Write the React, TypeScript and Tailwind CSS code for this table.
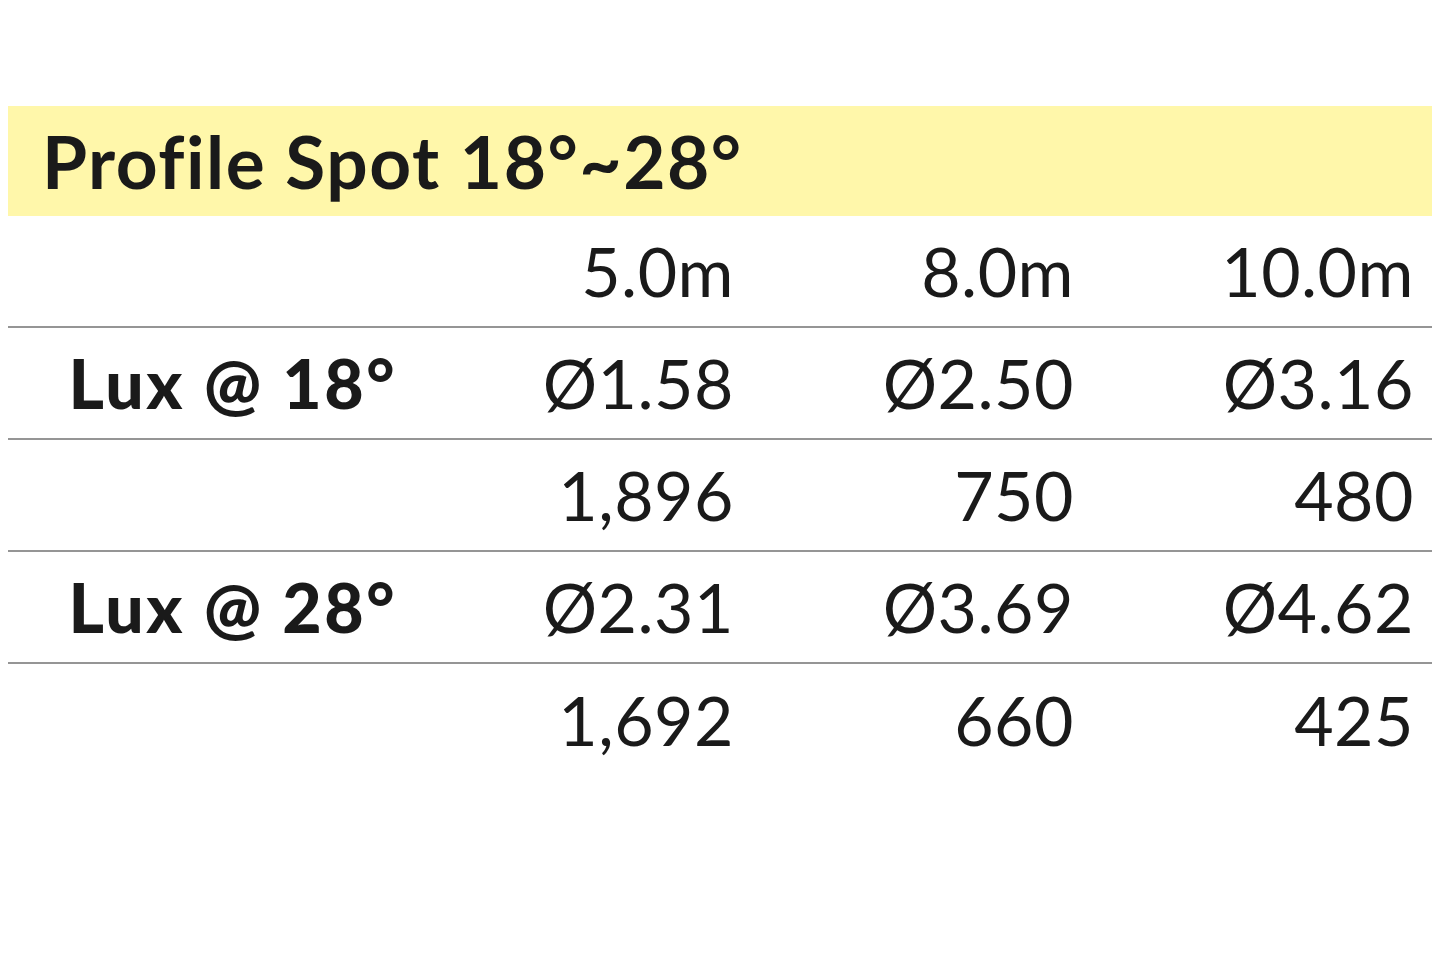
import React from 'react';

const rows: { label: string; values: string[] }[] = [
  { label: '', values: ['5.0m', '8.0m', '10.0m'] },
  { label: 'Lux @ 18°', values: ['Ø1.58', 'Ø2.50', 'Ø3.16'] },
  { label: '', values: ['1,896', '750', '480'] },
  { label: 'Lux @ 28°', values: ['Ø2.31', 'Ø3.69', 'Ø4.62'] },
  { label: '', values: ['1,692', '660', '425'] },
];

export default function App() {
  return (
    <div className="min-h-screen bg-white pt-[106px] px-[8px] text-[#1a1a1a] font-['Lato','Noto_Sans',sans-serif] [font-variant-ligatures:none]">
      <div className="w-[1424px]">
        {/* Title band */}
        <div className="h-[110px] bg-[#fff7aa] flex items-center pl-[34px]">
          <h1 className="text-[73px] font-bold leading-none tracking-[1.5px]">Profile Spot 18°~28°</h1>
        </div>

        {rows.map((row, i) => (
          <div
            key={i}
            className={`grid grid-cols-[404px_340px_340px_340px] h-[112px] items-center ${
              i < rows.length - 1 ? 'border-b-2 border-[#959595]' : ''
            }`}
          >
            <div className="text-right pr-[15px] text-[68px] font-black leading-none tracking-[2.5px]">{row.label}</div>
            {row.values.map((v, j) => (
              <div key={j} className="text-right pr-[18px] text-[68px] font-normal leading-none tracking-[0.5px]">
                {v}
              </div>
            ))}
          </div>
        ))}
      </div>
    </div>
  );
}
